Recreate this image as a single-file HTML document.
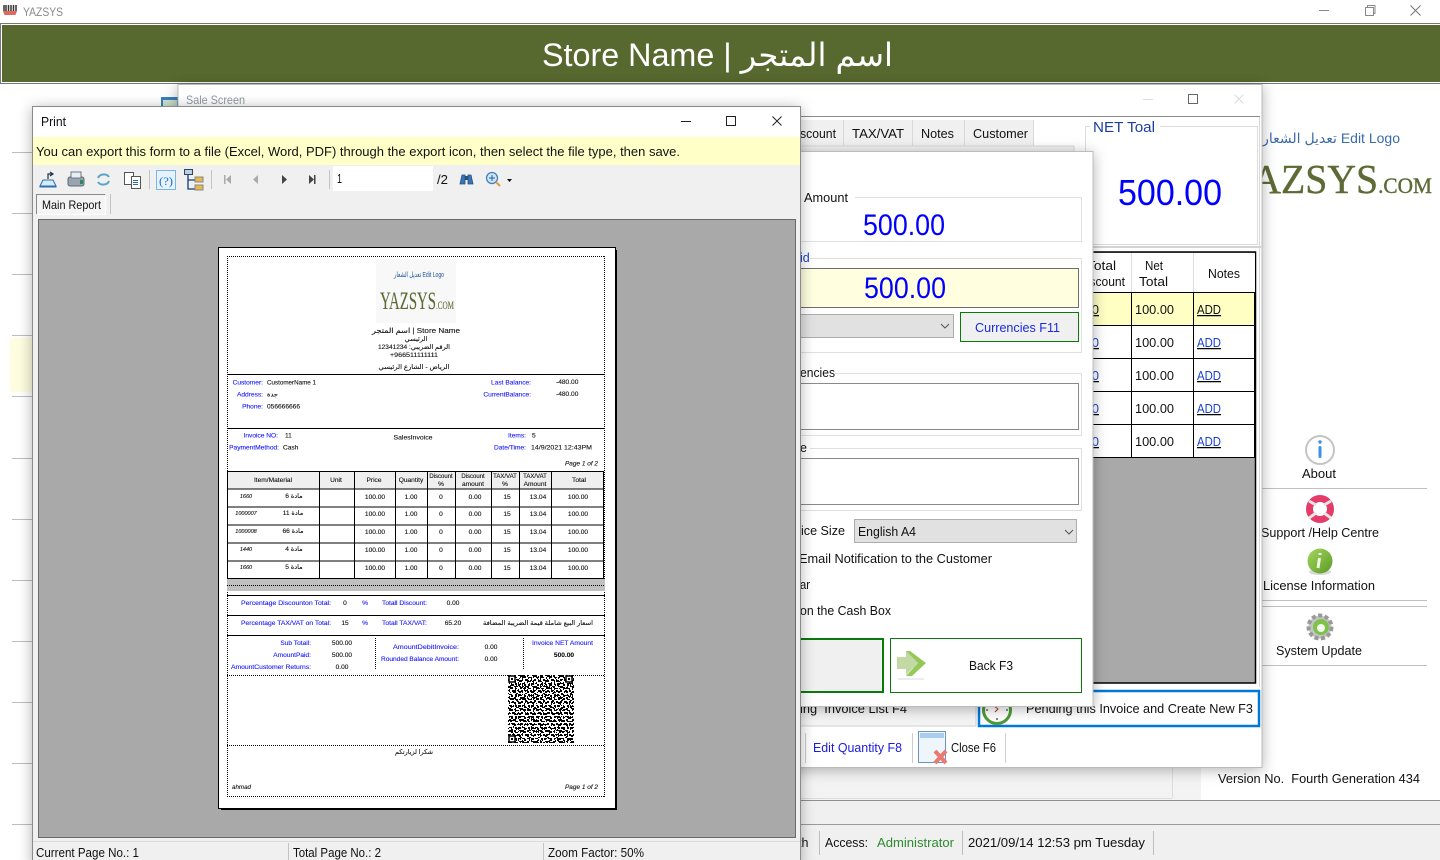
<!DOCTYPE html>
<html><head><meta charset="utf-8"><style>
html,body{margin:0;padding:0;background:#fff;width:1440px;height:860px;overflow:hidden}
svg{display:block}
text{font-family:"Liberation Sans","DejaVu Sans",sans-serif;font-size:12.5px;fill:#111;white-space:pre}
.b{fill:#0000ff}
.r text{font-size:6.6px;stroke:#111;stroke-width:.12}
.r .m{text-anchor:middle}
.r .e{text-anchor:end}
.r .bl{fill:#1a1aff;stroke:#1a1aff}
.r .i{font-style:italic}
</style></head><body>
<svg width="1440" height="860" viewBox="0 0 1440 860" xmlns="http://www.w3.org/2000/svg">
<defs>
<filter id="sh" x="-10%" y="-10%" width="120%" height="120%"><feDropShadow dx="0" dy="2" stdDeviation="7" flood-color="#000" flood-opacity=".3"/></filter>
<pattern id="q1" width="13" height="11" patternUnits="userSpaceOnUse" x="508" y="675"><rect width="13" height="11" fill="#fff"/><path d="M0 0h3v1h2v2H2V2H0zM6 0h2v2h2v1H7V2H6zM11 0h2v3h-1V1h-1zM0 4h2v2H0zM4 4h3v1h1v2H6V6H4zM9 4h2v1h2v2h-2V6H9zM1 8h3v1h1v2H3V9H1zM7 8h2v3H8v-1H7zM10 8h3v2h-2v1h-1z" fill="#000"/></pattern>
<pattern id="q2" width="9" height="7" patternUnits="userSpaceOnUse" x="510" y="677"><path d="M0 1h1v1H0zM3 0h1v2H3zM6 2h2v1H6zM1 4h2v1H1zM5 5h1v2H5zM8 5h1v1H8z" fill="#000"/><path d="M2 2h1v1H2zM7 0h1v1H7zM0 6h1v1H0zM4 3h1v1H4zM7 4h1v1H7z" fill="#fff"/></pattern>
<linearGradient id="gr" x1="0" x2="1" y1="0" y2="1"><stop offset="0" stop-color="#a5d65f"/><stop offset="1" stop-color="#5a9a25"/></linearGradient>
</defs>

<!-- app background -->
<rect width="1440" height="860" fill="#fff"/>
<path d="M4 5v6M6 5v6M8.500 5v6M11 5v6M13.500 5v6M16 5v6" stroke="#333" stroke-width="1.500"/>
<path d="M3 11h14l-1.500 4h-11z" fill="#e0685e"/>
<text x="23" y="16" style="fill:#8a8a8a;font-size:12px" textLength="40" lengthAdjust="spacingAndGlyphs">YAZSYS</text>
<rect x="1319" y="10" width="10" height="1" fill="#888"/>
<rect x="1365.500" y="7.500" width="8" height="8" fill="none" stroke="#888"/><path d="M1367.500 7V5.500h7.500v8h-1.500" fill="none" stroke="#888"/>
<path d="M1410.500 5.500l10 10m0-10l-10 10" stroke="#777" fill="none"/>

<rect x=".5" y="23.500" width="1440" height="60" fill="#fff" stroke="#777"/>
<rect x="2" y="25" width="1438" height="57" fill="#58692f"/>
<text x="542" y="66" style="fill:#fff;font-size:32px" textLength="351" lengthAdjust="spacingAndGlyphs">Store Name | اسم المتجر</text>

<!-- left stub lines -->
<g fill="#bdbdbd"><rect x="12" y="152" width="20" height="1"/><rect x="12" y="213" width="20" height="1"/><rect x="12" y="274" width="20" height="1"/><rect x="12" y="335" width="20" height="1"/><rect x="12" y="396" width="20" height="1"/><rect x="12" y="458" width="20" height="1"/><rect x="12" y="519" width="20" height="1"/><rect x="12" y="580" width="20" height="1"/><rect x="12" y="641" width="20" height="1"/><rect x="12" y="702" width="20" height="1"/><rect x="12" y="763" width="20" height="1"/><rect x="12" y="824" width="20" height="1"/></g>
<rect x="10" y="338" width="22" height="54" fill="#fffde0"/>

<!-- right panel -->
<text x="1400" y="143" text-anchor="end" style="fill:#3c6ca8;font-size:14px">تعديل الشعار Edit Logo</text>
<text x="1228" y="193" style="font-family:'Liberation Serif',serif;font-size:41px;fill:#5e6a36;stroke:#5e6a36;stroke-width:.4" textLength="204" lengthAdjust="spacingAndGlyphs">YAZSYS<tspan style="font-size:22px">.COM</tspan></text>

<circle cx="1320" cy="450" r="14" fill="#fff" stroke="#c4c4c4" stroke-width="2"/>
<rect x="1318.500" y="446" width="3" height="12" rx="1.500" fill="#3d8fe8"/><circle cx="1320" cy="442" r="1.700" fill="#3d8fe8"/>
<text x="1302" y="478" textLength="34" lengthAdjust="spacingAndGlyphs">About</text>
<rect x="1262" y="488" width="165" height="1" fill="#c0c0c0"/>
<circle cx="1320" cy="509" r="10.500" fill="none" stroke="#e63a6a" stroke-width="7"/>
<path d="M1309 501l7 4m8 0l7-4m-22 17l7-5m8 0l7 5" stroke="#e4e4e4" stroke-width="3"/>
<text x="1261" y="537" textLength="118" lengthAdjust="spacingAndGlyphs">Support /Help Centre</text>
<ellipse cx="1320" cy="572" rx="11" ry="3" fill="#d8d8d8"/>
<circle cx="1320" cy="561" r="12.500" fill="url(#gr)"/>
<path d="M1320 553v2m-.500 3l-1.500 10" stroke="#eef6df" stroke-width="3" fill="none"/>
<text x="1263" y="590" textLength="112" lengthAdjust="spacingAndGlyphs">License Information</text>
<rect x="1262" y="600" width="165" height="1" fill="#c0c0c0"/><rect x="1262" y="606" width="165" height="1" fill="#c0c0c0"/>
<circle cx="1320" cy="627" r="11.500" fill="#c4c4c4" stroke="#999" stroke-width="4" stroke-dasharray="4 2.500"/>
<circle cx="1321" cy="627" r="8" fill="#7ec24a"/><circle cx="1321" cy="628" r="4" fill="#f4fbef"/>
<text x="1276" y="655" textLength="86" lengthAdjust="spacingAndGlyphs">System Update</text>
<rect x="1262" y="665" width="165" height="1" fill="#c0c0c0"/>

<!-- bottom app strip -->
<rect x="33" y="768" width="1168" height="32" fill="#f3f3f3"/>
<rect x="1172" y="768" width="1" height="30" fill="#ddd"/>
<rect x="800" y="798" width="372" height="1" fill="#ddd"/>
<text x="1218" y="783" textLength="202" lengthAdjust="spacingAndGlyphs">Version No.  Fourth Generation 434</text>
<rect x="33" y="800" width="1407" height="1" fill="#8e8e8e"/>
<rect x="33" y="801" width="1407" height="59" fill="#f0f0f0"/>
<rect x="33" y="824" width="1407" height="1" fill="#9a9a9a"/>
<text x="798" y="847">th</text>
<rect x="819" y="831" width="1" height="24" fill="#bdbdbd"/>
<text x="825" y="847" textLength="43" lengthAdjust="spacingAndGlyphs">Access:</text>
<text x="877" y="847" style="fill:#2e8b2e" textLength="77" lengthAdjust="spacingAndGlyphs">Administrator</text>
<rect x="962" y="831" width="1" height="24" fill="#bdbdbd"/>
<text x="968" y="847" textLength="177" lengthAdjust="spacingAndGlyphs">2021/09/14 12:53 pm Tuesday</text>
<rect x="1153" y="831" width="1" height="24" fill="#bdbdbd"/>

<!-- sale screen window -->
<rect x="161" y="97" width="18" height="14" fill="#3a7fc1"/><rect x="163" y="100" width="14" height="10" fill="#cfe6d0"/>
<rect x="178" y="84.500" width="1084" height="683" fill="#fff" stroke="#bbb" filter="url(#sh)"/>
<text x="186" y="104" style="fill:#8d9aa0;font-size:12px" textLength="59" lengthAdjust="spacingAndGlyphs">Sale Screen</text>
<rect x="1143" y="99" width="10" height="1" fill="#ddd"/>
<rect x="1188.500" y="94.500" width="9" height="9" fill="none" stroke="#666"/>
<path d="M1234.500 94.500l9 9m0-9l-9 9" stroke="#ddd" fill="none"/>
<rect x="178" y="116" width="1082" height="1" fill="#8a8a8a"/>
<rect x="1259" y="117" width="1" height="570" fill="#d8d8d8"/>
<!-- tabs -->
<rect x="800" y="120" width="233" height="26" fill="#f0f0f0"/>
<rect x="843" y="120" width="1" height="26" fill="#d9d9d9"/><rect x="912" y="120" width="1" height="26" fill="#d9d9d9"/><rect x="964" y="120" width="1" height="26" fill="#d9d9d9"/><rect x="1033" y="120" width="1" height="26" fill="#d9d9d9"/>
<rect x="800" y="146" width="274" height="8" fill="#f2f2f2" stroke="#d9d9d9"/>
<text x="800" y="138" textLength="36" lengthAdjust="spacingAndGlyphs">scount</text>
<text x="852" y="138" textLength="52" lengthAdjust="spacingAndGlyphs">TAX/VAT</text>
<text x="921" y="138" textLength="33" lengthAdjust="spacingAndGlyphs">Notes</text>
<text x="973" y="138" textLength="55" lengthAdjust="spacingAndGlyphs">Customer</text>
<!-- net total -->
<rect x="1085.500" y="126.500" width="172" height="118" fill="#fff" stroke="#dcdcdc"/>
<rect x="1090" y="118" width="70" height="16" fill="#fff"/>
<text x="1093" y="132" style="fill:#1a3fa0;font-size:15px" textLength="62" lengthAdjust="spacingAndGlyphs">NET Toal</text>
<text x="1118" y="205" class="b" style="font-size:36px" textLength="104" lengthAdjust="spacingAndGlyphs">500.00</text>
<rect x="1093" y="246" width="168" height="2" fill="#d4d4d4"/>
<!-- grid -->
<rect x="1070" y="252" width="185.500" height="431" fill="#a9a9a9" stroke="#000" stroke-width="1.500"/>
<rect x="1071" y="253" width="184" height="39" fill="#fff"/>
<rect x="1131" y="253" width="1" height="39" fill="#ddd"/><rect x="1193" y="253" width="1" height="39" fill="#ddd"/>
<rect x="1071" y="293" width="184" height="165" fill="#fff"/>
<rect x="1071" y="293" width="184" height="32" fill="#ffffc4"/>
<g fill="#000"><rect x="1071" y="292" width="184" height="1"/><rect x="1071" y="325" width="184" height="1"/><rect x="1071" y="358" width="184" height="1"/><rect x="1071" y="391" width="184" height="1"/><rect x="1071" y="424" width="184" height="1"/><rect x="1071" y="457" width="184" height="1"/><rect x="1131" y="293" width="1" height="165"/><rect x="1193" y="293" width="1" height="165"/><rect x="1254" y="292" width="2" height="166"/></g>
<text x="1087" y="270" textLength="29" lengthAdjust="spacingAndGlyphs">Total</text>
<text x="1078" y="286" textLength="47" lengthAdjust="spacingAndGlyphs">Discount</text>
<text x="1145" y="270" textLength="18" lengthAdjust="spacingAndGlyphs">Net</text>
<text x="1139" y="286" textLength="29" lengthAdjust="spacingAndGlyphs">Total</text>
<text x="1208" y="278" textLength="32" lengthAdjust="spacingAndGlyphs">Notes</text>
<g text-decoration="underline">
<text x="1092" y="314">0</text><text x="1197" y="314" textLength="24" lengthAdjust="spacingAndGlyphs">ADD</text>
<text x="1092" y="347" style="fill:#1a40d0">0</text><text x="1197" y="347" style="fill:#1a40d0" textLength="24" lengthAdjust="spacingAndGlyphs">ADD</text>
<text x="1092" y="380" style="fill:#1a40d0">0</text><text x="1197" y="380" style="fill:#1a40d0" textLength="24" lengthAdjust="spacingAndGlyphs">ADD</text>
<text x="1092" y="413" style="fill:#1a40d0">0</text><text x="1197" y="413" style="fill:#1a40d0" textLength="24" lengthAdjust="spacingAndGlyphs">ADD</text>
<text x="1092" y="446" style="fill:#1a40d0">0</text><text x="1197" y="446" style="fill:#1a40d0" textLength="24" lengthAdjust="spacingAndGlyphs">ADD</text>
</g>
<g>
<text x="1135" y="314" textLength="39" lengthAdjust="spacingAndGlyphs">100.00</text>
<text x="1135" y="347" textLength="39" lengthAdjust="spacingAndGlyphs">100.00</text>
<text x="1135" y="380" textLength="39" lengthAdjust="spacingAndGlyphs">100.00</text>
<text x="1135" y="413" textLength="39" lengthAdjust="spacingAndGlyphs">100.00</text>
<text x="1135" y="446" textLength="39" lengthAdjust="spacingAndGlyphs">100.00</text>
</g>
<!-- action buttons -->
<rect x="800" y="690" width="176" height="36" fill="#f4f4f4" stroke="#cfcfcf"/>
<text x="800" y="713" textLength="107" lengthAdjust="spacingAndGlyphs">ing  Invoice List F4</text>
<rect x="979" y="691" width="280" height="35" fill="#fff" stroke="#0078d7" stroke-width="2.500"/>
<circle cx="997" cy="710" r="13.500" fill="#fff" stroke="#4f9a35" stroke-width="3"/>
<path d="M994 706l4 3-3 3" stroke="#a33" fill="none"/><circle cx="997" cy="719" r="1" fill="#666"/><circle cx="987" cy="710" r="1" fill="#666"/><circle cx="1007" cy="710" r="1" fill="#666"/>
<text x="1026" y="713" textLength="227" lengthAdjust="spacingAndGlyphs">Pending this Invoice and Create New F3</text>
<rect x="805" y="733" width="1" height="30" fill="#ccc"/>
<text x="813" y="752" style="fill:#1a1ae0" textLength="89" lengthAdjust="spacingAndGlyphs">Edit Quantity F8</text>
<rect x="912" y="733" width="1" height="30" fill="#ccc"/>
<rect x="918.500" y="731.500" width="27" height="31" fill="#eef6fc" stroke="#6b93c4"/>
<rect x="920" y="733" width="24" height="5" fill="#a8cdee"/>
<path d="M935 751l11 12m0-12l-11 12" stroke="#e87a70" stroke-width="4"/>
<text x="951" y="752" textLength="45" lengthAdjust="spacingAndGlyphs">Close F6</text>
<rect x="1005" y="733" width="1" height="30" fill="#ccc"/>

<!-- payment popup -->
<rect x="700" y="151.500" width="393" height="555" fill="#fff" stroke="#bdbdbd" filter="url(#sh)"/>
<rect x="780.500" y="197.500" width="301" height="44" fill="#fff" stroke="#dfdfdf"/>
<rect x="800" y="190" width="55" height="14" fill="#fff"/>
<text x="804" y="202" textLength="44" lengthAdjust="spacingAndGlyphs">Amount</text>
<text x="863" y="235" class="b" style="font-size:30px" textLength="82" lengthAdjust="spacingAndGlyphs">500.00</text>
<rect x="780.500" y="258.500" width="301" height="94" fill="#fff" stroke="#dfdfdf"/>
<rect x="790" y="250" width="20" height="14" fill="#fff"/>
<text x="800" y="262" style="fill:#1a40d0">id</text>
<rect x="780.500" y="268.500" width="298" height="39" fill="#ffffdf" stroke="#6e6e6e"/>
<text x="864" y="298" class="b" style="font-size:30px" textLength="82" lengthAdjust="spacingAndGlyphs">500.00</text>
<rect x="780.500" y="314.500" width="173" height="23" fill="#e1e1e1" stroke="#adadad"/>
<path d="M941 324l4 4 4-4" fill="none" stroke="#555"/>
<rect x="960.500" y="312.500" width="118" height="29" fill="#f0f0f0" stroke="#0a7a0a"/>
<text x="975" y="332" style="fill:#1a2ae0" textLength="85" lengthAdjust="spacingAndGlyphs">Currencies F11</text>
<rect x="780.500" y="373.500" width="301" height="62" fill="#fff" stroke="#dfdfdf"/>
<rect x="790" y="365" width="45" height="14" fill="#fff"/>
<text x="800" y="377" textLength="35" lengthAdjust="spacingAndGlyphs">encies</text>
<rect x="780.500" y="383.500" width="298" height="46" fill="#fff" stroke="#8a8a8a"/>
<rect x="780.500" y="448.500" width="301" height="62" fill="#fff" stroke="#dfdfdf"/>
<rect x="790" y="440" width="20" height="14" fill="#fff"/>
<text x="800" y="452">e</text>
<rect x="780.500" y="458.500" width="298" height="46" fill="#fff" stroke="#8a8a8a"/>
<rect x="792" y="512" width="8" height="190" fill="#fff"/>
<text x="801" y="535" textLength="44" lengthAdjust="spacingAndGlyphs">ice Size</text>
<rect x="854.500" y="519.500" width="222" height="23" fill="#e1e1e1" stroke="#adadad"/>
<text x="858" y="536" textLength="58" lengthAdjust="spacingAndGlyphs">English A4</text>
<path d="M1065 530l4 4 4-4" fill="none" stroke="#555"/>
<text x="799" y="563" textLength="193" lengthAdjust="spacingAndGlyphs">Email Notification to the Customer</text>
<text x="800" y="589" textLength="10" lengthAdjust="spacingAndGlyphs">ar</text>
<text x="800" y="615" textLength="91" lengthAdjust="spacingAndGlyphs">on the Cash Box</text>
<rect x="780" y="639" width="103" height="53" fill="#f0f0f0" stroke="#0a7a0a" stroke-width="2"/>
<rect x="890.500" y="638.500" width="191" height="54" fill="#fff" stroke="#0a7a0a"/>
<path d="M897 657h9v-6l12 12-12 12v-6h-9z" fill="#c3d9a3"/>
<path d="M906 651l4 0 16 12-14 13-6 0 12-13z" fill="#94c95a"/>
<rect x="898" y="678" width="26" height="2" fill="#ececec"/>
<text x="969" y="670" textLength="44" lengthAdjust="spacingAndGlyphs">Back F3</text>

<!-- print window -->
<rect x="32.500" y="106.500" width="768" height="760" fill="#f0f0f0" stroke="#8a8a8a" filter="url(#sh)"/>
<rect x="33" y="107" width="767" height="30" fill="#fff"/>
<text x="41" y="126" textLength="25" lengthAdjust="spacingAndGlyphs">Print</text>
<rect x="681" y="121" width="10" height="1" fill="#222"/>
<rect x="726.500" y="116.500" width="9" height="9" fill="none" stroke="#222"/>
<path d="M772.500 116.500l9 9m0-9l-9 9" stroke="#222" fill="none"/>
<rect x="33" y="137" width="767" height="28" fill="#ffffc8"/>
<text x="36" y="156" textLength="644" lengthAdjust="spacingAndGlyphs">You can export this form to a file (Excel, Word, PDF) through the export icon, then select the file type, then save.</text>

<!-- toolbar -->
<path d="M40 186l3-6h10l3 6zM40 186h16v1H40z" fill="#d8ecff" stroke="#2a6fb0"/>
<path d="M48 179v-5h4m-2-2l3 2-3 2" fill="none" stroke="#234" stroke-width="1.200"/>
<rect x="68" y="177" width="16" height="9" rx="2" fill="#9aa4ae" stroke="#5e6a78"/><rect x="71" y="172" width="10" height="6" fill="#e9eef3" stroke="#6a7684"/><rect x="80" y="180" width="3" height="4" fill="#2a8a5a"/>
<path d="M98 178a6 5 0 0 1 11-1m0 4a6 5 0 0 1-11 1" fill="none" stroke="#5aa6c8" stroke-width="2"/>
<rect x="124.500" y="172.500" width="9" height="12" fill="#fff" stroke="#555"/><rect x="131.500" y="176.500" width="9" height="12" fill="#fff" stroke="#555"/><path d="M133 180.500h5m-5 2h5m-5 2h5" stroke="#2a6fb0"/>
<rect x="149" y="170" width="1" height="19" fill="#c4c4c4"/>
<rect x="156.500" y="170.500" width="19" height="19" fill="#e6f3ff" stroke="#7ab4e8"/>
<text x="159" y="185" style="fill:#1a6fd0;font-size:12px;font-family:'Liberation Serif',serif" textLength="14" lengthAdjust="spacingAndGlyphs">(?)</text>
<rect x="184.500" y="169.500" width="8" height="5" fill="#b8d0ea" stroke="#345"/>
<path d="M188 175v14h7m-7-9h7" fill="none" stroke="#123a78" stroke-width="1.300"/>
<rect x="195" y="177" width="8" height="5" fill="#e8b84e" stroke="#888"/><rect x="195" y="185" width="8" height="5" fill="#e8b84e" stroke="#888"/>
<rect x="211" y="170" width="1" height="19" fill="#c4c4c4"/>
<rect x="224" y="175" width="1.500" height="9" fill="#aaa"/><path d="M231 175v9l-5-4.500z" fill="#aaa"/>
<path d="M258 175v9l-5-4.500z" fill="#aaa"/>
<path d="M282 175v9l5-4.500z" fill="#444"/>
<path d="M309 175v9l5-4.500z" fill="#444"/><rect x="314" y="175" width="1.500" height="9" fill="#444"/>
<rect x="329" y="170" width="1" height="19" fill="#c4c4c4"/>
<rect x="333" y="166" width="100" height="25" fill="#fff"/>
<text x="337" y="183" textLength="5" lengthAdjust="spacingAndGlyphs">1</text>
<text x="437" y="184" textLength="11" lengthAdjust="spacingAndGlyphs">/2</text>
<path d="M460 184l2-9h3v9zM468 184v-9h3l2 9z" fill="#3a74b8" stroke="#25507f" stroke-width=".8"/><rect x="465" y="176" width="3" height="4" fill="#25507f"/>
<circle cx="492" cy="178" r="5.500" fill="#cfe6f8" stroke="#4a7fb4" stroke-width="1.300"/>
<path d="M489 178h6m-3-3v6" stroke="#1f5fa8"/><path d="M496 182l4 4" stroke="#d8a050" stroke-width="2.200"/>
<path d="M507 179h5l-2.500 3z" fill="#111"/>
<!-- tab -->
<rect x="37" y="195" width="68" height="19" fill="#f4f4f4"/>
<path d="M36.500 214.500v-20h69" fill="none" stroke="#8a8a8a"/>
<path d="M36.500 214.500h69v-20" fill="none" stroke="#fff"/>
<text x="42" y="209" style="font-size:12px" textLength="59" lengthAdjust="spacingAndGlyphs">Main Report</text>
<rect x="110" y="194" width="1" height="20" fill="#c4c4c4"/>
<!-- preview -->
<rect x="38.500" y="219.500" width="757" height="618" fill="#a9a9a9" stroke="#6a6a6a"/>
<rect x="33" y="841" width="767" height="1" fill="#dcdcdc"/>
<text x="36" y="857" textLength="103" lengthAdjust="spacingAndGlyphs">Current Page No.: 1</text>
<rect x="288" y="843" width="1" height="17" fill="#c4c4c4"/>
<text x="293" y="857" textLength="88" lengthAdjust="spacingAndGlyphs">Total Page No.: 2</text>
<rect x="543" y="843" width="1" height="17" fill="#c4c4c4"/>
<text x="548" y="857" textLength="96" lengthAdjust="spacingAndGlyphs">Zoom Factor: 50%</text>

<!-- report page -->
<rect x="221" y="250" width="396" height="560" fill="#000"/>
<rect x="218.500" y="247.500" width="397" height="561" fill="#fff" stroke="#000"/>
<path d="M227 256.500h378M227 796.500h378M227.500 256v541M604.500 256v541" fill="none" stroke="#000" stroke-dasharray="1 1"/>
<rect x="376" y="259" width="80" height="64" fill="#f8f8f8"/>
<g class="r">
<text x="419" y="277" class="m" style="fill:#3c6ca8;stroke:#3c6ca8;font-size:7.500px" textLength="50" lengthAdjust="spacingAndGlyphs">تعديل الشعار Edit Logo</text>
<text x="417" y="309" class="m" style="font-family:'Liberation Serif',serif;font-size:25px;fill:#5e6a36;stroke:#5e6a36" textLength="74" lengthAdjust="spacingAndGlyphs">YAZSYS<tspan style="font-size:12px">.COM</tspan></text>
<text x="416" y="333" class="m" style="font-size:7.500px" textLength="88" lengthAdjust="spacingAndGlyphs">اسم المتجر | Store Name</text>
<text x="416" y="341" class="m">الرئيسي</text>
<text x="414" y="349" class="m" textLength="72" lengthAdjust="spacingAndGlyphs">12341234 :الرقم الضريبي</text>
<text x="414" y="357" class="m" textLength="48" lengthAdjust="spacingAndGlyphs">+966511111111</text>
<text x="414" y="369" class="m" textLength="71" lengthAdjust="spacingAndGlyphs">الرياض - الشارع الرئيسي</text>

<g fill="#000"><rect x="227" y="374" width="378" height="1"/><rect x="227" y="428" width="378" height="1"/></g>
<g class="bl">
<text x="263" y="384.500" class="e bl">Customer:</text><text x="263" y="396.500" class="e bl">Address:</text><text x="263" y="408.500" class="e bl">Phone:</text>
<text x="531" y="384.500" class="e bl">Last Balance:</text><text x="531" y="396.500" class="e bl">CurrentBalance:</text>
<text x="278" y="437.500" class="e bl">Invoice NO:</text><text x="279" y="449.500" class="e bl">PaymentMethod:</text>
<text x="526" y="437.500" class="e bl">Items:</text><text x="526" y="449.500" class="e bl">Date/Time:</text>
</g>
<text x="267" y="384.500" textLength="49" lengthAdjust="spacingAndGlyphs">CustomerName 1</text>
<text x="267" y="396.500">جدة</text>
<text x="267" y="408.500" textLength="33" lengthAdjust="spacingAndGlyphs">056666666</text>
<text x="556" y="384">-480.00</text><text x="556" y="396">-480.00</text>
<text x="285" y="437.500">11</text><text x="283" y="449.500">Cash</text>
<text x="413" y="439.500" class="m" textLength="39" lengthAdjust="spacingAndGlyphs">SalesInvoice</text>
<text x="532" y="437.500">5</text>
<text x="531" y="449.500" textLength="61" lengthAdjust="spacingAndGlyphs">14/9/2021 12:43PM</text>
<text x="598" y="465.500" class="e i" textLength="33" lengthAdjust="spacingAndGlyphs">Page 1 of 2</text>

<!-- table -->
<rect x="227.500" y="471.500" width="376" height="17" fill="#efefef"/>
<g fill="none" stroke="#000"><rect x="227.500" y="471.500" width="376" height="107"/>
<path d="M227 489h377M227 507h377M227 525h377M227 543h377M227 561h377M319.500 471v108M354.500 471v108M395.500 471v108M427.500 471v108M455.500 471v108M491.500 471v108M519.500 471v108M551.500 471v108"/></g>
<text x="273" y="482" class="m">Item/Material</text><text x="336" y="482" class="m">Unit</text><text x="374" y="482" class="m">Price</text><text x="411" y="482" class="m">Quantity</text>
<text x="441" y="478" class="m" style="font-size:6px">Discount</text><text x="441" y="486" class="m">%</text>
<text x="473" y="478" class="m" style="font-size:6px">Discount</text><text x="473" y="486" class="m">amount</text>
<text x="505" y="478" class="m" style="font-size:6px">TAX/VAT</text><text x="505" y="486" class="m">%</text>
<text x="535" y="478" class="m" style="font-size:6px">TAX/VAT</text><text x="535" y="486" class="m">Amount</text>
<text x="579" y="482" class="m">Total</text>

<g>
<text x="246" y="498" class="m i" style="font-size:5.500px">1660</text><text x="294" y="498" class="m">مادة 6</text>
<text x="246" y="515" class="m i" style="font-size:5.500px">1000007</text><text x="293" y="515" class="m">مادة 11</text>
<text x="246" y="533" class="m i" style="font-size:5.500px">1000008</text><text x="293" y="533" class="m">مادة 66</text>
<text x="246" y="551" class="m i" style="font-size:5.500px">1440</text><text x="294" y="551" class="m">مادة 4</text>
<text x="246" y="569" class="m i" style="font-size:5.500px">1660</text><text x="294" y="569" class="m">مادة 5</text>
</g>
<g>
<text x="375" y="499" class="m">100.00</text><text x="411" y="499" class="m">1.00</text><text x="441" y="499" class="m">0</text><text x="475" y="499" class="m">0.00</text><text x="507" y="499" class="m">15</text><text x="538" y="499" class="m">13.04</text><text x="578" y="499" class="m">100.00</text>
<text x="375" y="516" class="m">100.00</text><text x="411" y="516" class="m">1.00</text><text x="441" y="516" class="m">0</text><text x="475" y="516" class="m">0.00</text><text x="507" y="516" class="m">15</text><text x="538" y="516" class="m">13.04</text><text x="578" y="516" class="m">100.00</text>
<text x="375" y="534" class="m">100.00</text><text x="411" y="534" class="m">1.00</text><text x="441" y="534" class="m">0</text><text x="475" y="534" class="m">0.00</text><text x="507" y="534" class="m">15</text><text x="538" y="534" class="m">13.04</text><text x="578" y="534" class="m">100.00</text>
<text x="375" y="552" class="m">100.00</text><text x="411" y="552" class="m">1.00</text><text x="441" y="552" class="m">0</text><text x="475" y="552" class="m">0.00</text><text x="507" y="552" class="m">15</text><text x="538" y="552" class="m">13.04</text><text x="578" y="552" class="m">100.00</text>
<text x="375" y="570" class="m">100.00</text><text x="411" y="570" class="m">1.00</text><text x="441" y="570" class="m">0</text><text x="475" y="570" class="m">0.00</text><text x="507" y="570" class="m">15</text><text x="538" y="570" class="m">13.04</text><text x="578" y="570" class="m">100.00</text>
</g>

<rect x="227" y="579" width="378" height="12" fill="#c0c0c0"/>
<path d="M227 585.500h378" stroke="#000" stroke-dasharray="1 1"/>
<g fill="#000"><rect x="227" y="595" width="378" height="1"/><rect x="227" y="615" width="378" height="1"/><rect x="227" y="635" width="378" height="1"/></g>
<path d="M375.500 638v32M523.500 638v32M227 675.500h378M227 745.500h378" stroke="#000" stroke-dasharray="1 1"/>

<text x="331" y="605" class="e bl" textLength="90" lengthAdjust="spacingAndGlyphs">Percentage Discounton Total:</text>
<text x="345" y="605" class="m">0</text><text x="365" y="605" class="m bl">%</text>
<text x="427" y="605" class="e bl" textLength="45" lengthAdjust="spacingAndGlyphs">Totall Discount:</text>
<text x="453" y="605" class="m">0.00</text>
<text x="331" y="625" class="e bl" textLength="90" lengthAdjust="spacingAndGlyphs">Percentage TAX/VAT on Total:</text>
<text x="345" y="625" class="m">15</text><text x="365" y="625" class="m bl">%</text>
<text x="427" y="625" class="e bl" textLength="45" lengthAdjust="spacingAndGlyphs">Totall TAX/VAT:</text>
<text x="453" y="625" class="m">65.20</text>
<text x="593" y="625" class="e" textLength="110" lengthAdjust="spacingAndGlyphs">اسعار البيع شاملة قيمة الضريبة المضافة</text>

<text x="311" y="645" class="e bl">Sub Totall:</text><text x="342" y="645" class="m">500.00</text>
<text x="311" y="657" class="e bl">AmountPaid:</text><text x="342" y="657" class="m">500.00</text>
<text x="311" y="669" class="e bl" textLength="80" lengthAdjust="spacingAndGlyphs">AmountCustomer Returns:</text><text x="342" y="669" class="m">0.00</text>
<text x="459" y="649" class="e bl" textLength="66" lengthAdjust="spacingAndGlyphs">AmountDebitInvoice:</text><text x="491" y="649" class="m">0.00</text>
<text x="459" y="661" class="e bl" textLength="78" lengthAdjust="spacingAndGlyphs">Rounded Balance Amount:</text><text x="491" y="661" class="m">0.00</text>
<text x="593" y="645" class="e bl" textLength="61" lengthAdjust="spacingAndGlyphs">Invoice NET Amount</text>
<text x="564" y="657" class="m" style="font-weight:bold">500.00</text>

<text x="414" y="754" class="m" textLength="38" lengthAdjust="spacingAndGlyphs">شكرا لزيارتكم</text>
<text x="232" y="789" class="i" textLength="19" lengthAdjust="spacingAndGlyphs">ahmad</text>
<text x="598" y="789" class="e i" textLength="33" lengthAdjust="spacingAndGlyphs">Page 1 of 2</text>
</g>
<!-- QR -->
<rect x="508" y="675" width="66" height="68" fill="url(#q1)"/>
<rect x="508" y="675" width="66" height="68" fill="url(#q2)"/>
<g fill="#fff" stroke="#000" stroke-width="1.500"><rect x="509" y="676" width="6" height="6"/><rect x="566" y="676" width="6" height="6"/><rect x="509" y="736" width="6" height="6"/></g>
<rect x="511" y="678" width="2" height="2"/><rect x="568" y="678" width="2" height="2"/><rect x="511" y="738" width="2" height="2"/>
</svg>
</body></html>
